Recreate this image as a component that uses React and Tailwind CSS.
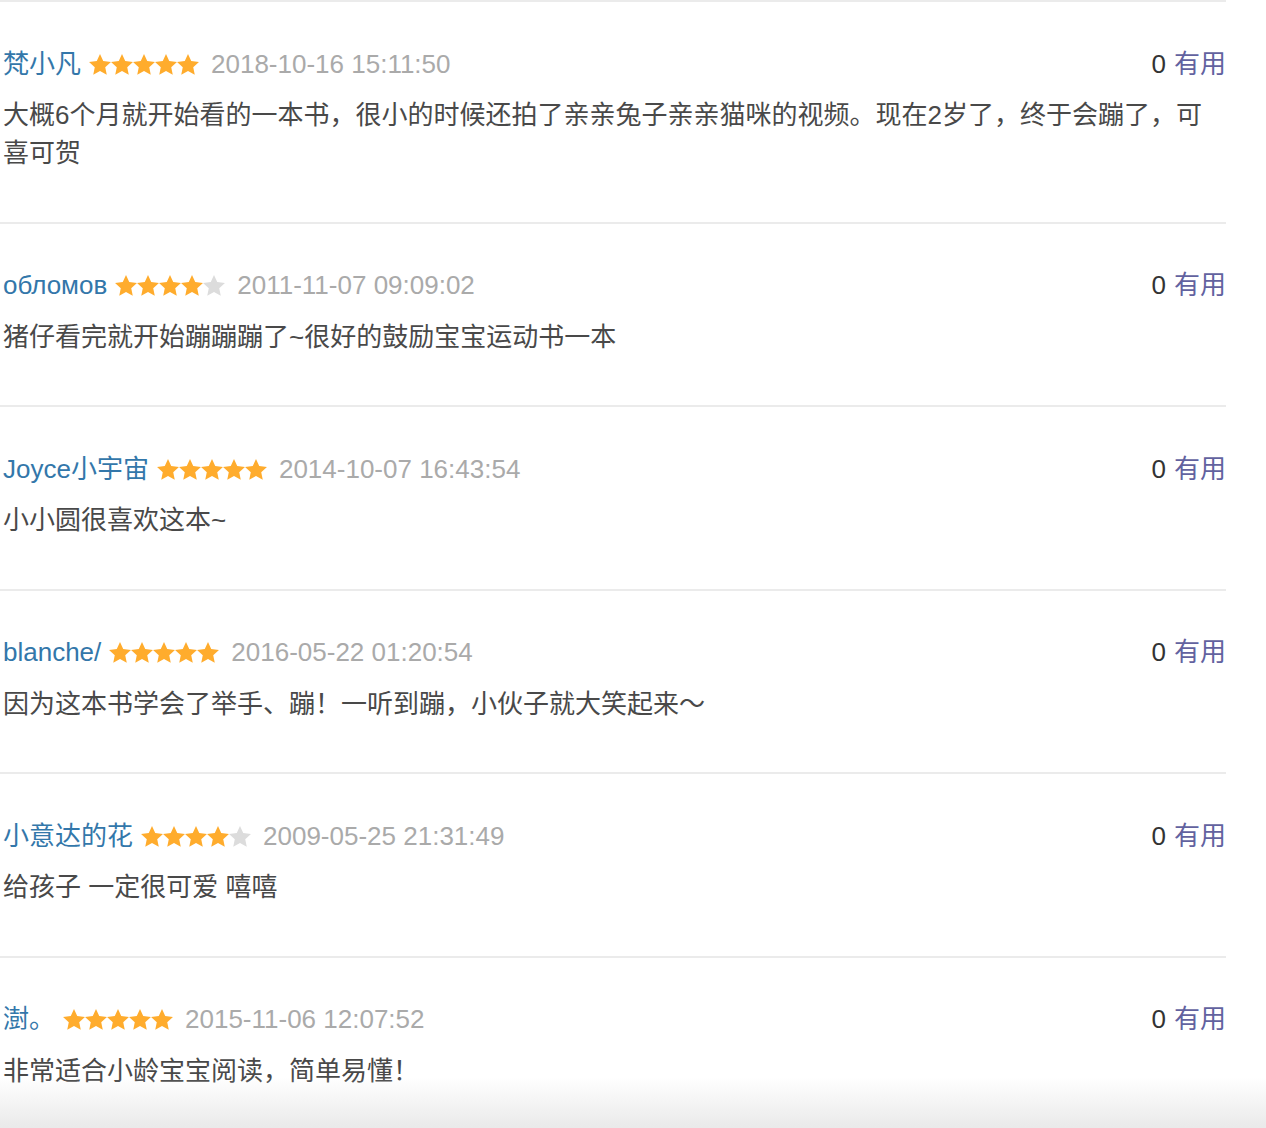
import React from "react";

const reviews = [
  {
    name: "梵小凡",
    rating: 5,
    time: "2018-10-16 15:11:50",
    text: "大概6个月就开始看的一本书，很小的时候还拍了亲亲兔子亲亲猫咪的视频。现在2岁了，终于会蹦了，可喜可贺",
  },
  { name: "обломов", rating: 4, time: "2011-11-07 09:09:02", text: "猪仔看完就开始蹦蹦蹦了~很好的鼓励宝宝运动书一本" },
  { name: "Joyce小宇宙", rating: 5, time: "2014-10-07 16:43:54", text: "小小圆很喜欢这本~" },
  { name: "blanche/", rating: 5, time: "2016-05-22 01:20:54", text: "因为这本书学会了举手、蹦！一听到蹦，小伙子就大笑起来～" },
  { name: "小意达的花", rating: 4, time: "2009-05-25 21:31:49", text: "给孩子 一定很可爱 嘻嘻" },
  { name: "澍。", rating: 5, time: "2015-11-06 12:07:52", text: "非常适合小龄宝宝阅读，简单易懂！" },
];

const Star = ({ on }) => (
  <svg width="22" height="21" viewBox="0 0 22 21" className="block">
    <polygon
      points="11,0 14.23,7.05 21.94,7.95 16.23,13.2 17.76,20.8 11,17 4.24,20.8 5.77,13.2 0.06,7.95 7.77,7.05"
      fill={on ? "#ffac2d" : "#dcdcdc"}
    />
  </svg>
);

const Stars = ({ rating }) => (
  <span className="flex items-center">
    {[1, 2, 3, 4, 5].map((i) => (
      <Star key={i} on={i <= rating} />
    ))}
  </span>
);

export default function App() {
  return (
    <div
      className="relative min-h-[1128px] bg-white overflow-hidden"
      style={{ fontFamily: '"Liberation Sans", Arial, "Noto Sans CJK SC", sans-serif' }}
    >
      <div className="w-[1226px] border-t-2 border-[#ebebeb]">
        {reviews.map((r, idx) => (
          <div key={idx} className="pt-[43px] pb-[49.5px] border-b-2 border-[#ebebeb] pl-[3px]">
            <div className="flex items-center h-[38px] text-[26px]">
              <span className="text-[#3377aa]">{r.name}</span>
              <span className="ml-[8px]">
                <Stars rating={r.rating} />
              </span>
              <span className="ml-[12px] text-[#aaaaaa]">{r.time}</span>
              <span className="ml-auto text-[#333333]">0</span>
              <span className="ml-[8px] text-[#62629f]">有用</span>
            </div>
            <p className="mt-[13px] text-[26px] leading-[38px] text-[#494949] pr-[20px]">{r.text}</p>
          </div>
        ))}
      </div>
      <div className="pointer-events-none absolute left-0 right-0 bottom-0 h-[64px] bg-gradient-to-b from-white/0 to-[#e4e4e4]" />
    </div>
  );
}
